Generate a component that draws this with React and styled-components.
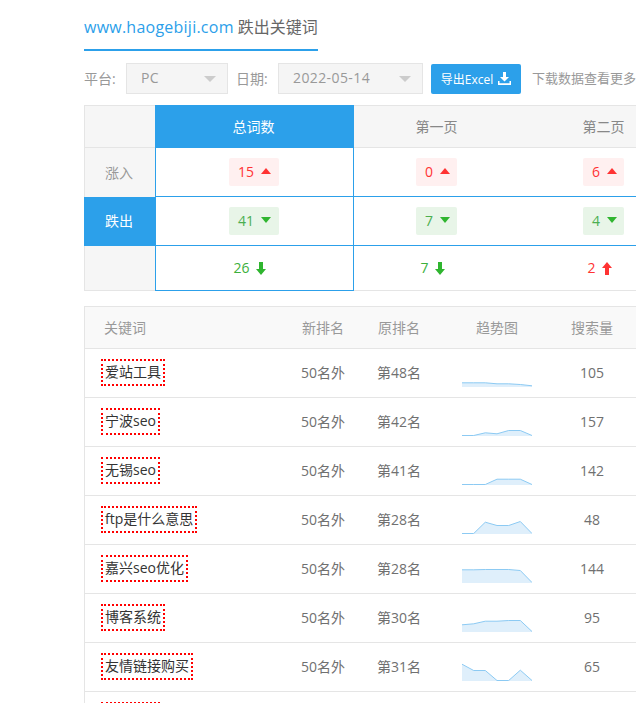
import React from "react";
import styled, { createGlobalStyle } from "styled-components";

const BLUE = "#2ca0ea";
const LINE = "#e5e5e5";
const RED = "#ff3333";
const GREEN = "#2fb52f";

const GlobalStyle = createGlobalStyle`
  html, body {
    margin: 0;
    padding: 0;
    height: 100%;
    overflow: hidden;
    background: #fff;
  }
  body {
    font-family: "Open Sans", "Noto Sans CJK SC", sans-serif;
    font-size: 14px;
    color: #666;
  }
  * { box-sizing: border-box; }
`;

const Page = styled.div`
  width: 800px;
  padding: 13px 0 0 84px;
`;

const Title = styled.h2`
  display: inline-block;
  margin: 0;
  height: 38px;
  font-size: 16px;
  font-weight: 400;
  line-height: 28px;
  color: #666;
  border-bottom: 2px solid ${BLUE};
  white-space: nowrap;
`;

const Domain = styled.span`
  color: ${BLUE};
  letter-spacing: 0.24px;
`;

const Filters = styled.div`
  display: flex;
  align-items: center;
  gap: 8px;
  margin-top: 12px;
  height: 31px;
  white-space: nowrap;
`;

const Label = styled.span`
  width: 34px;
  padding-bottom: 2px;
  color: #999;
`;

const Select = styled.div`
  display: flex;
  align-items: center;
  justify-content: space-between;
  width: ${(p) => p.$width}px;
  height: 31px;
  padding: 0 11px 2px 14px;
  background: #f5f5f5;
  border: 1px solid ${LINE};
  color: #999;
  letter-spacing: 0.4px;
`;

const Caret = styled.i`
  margin-top: 2px;
  border-left: 6px solid transparent;
  border-right: 6px solid transparent;
  border-top: 6px solid #ccc;
`;

const ExportButton = styled.div`
  display: flex;
  align-items: center;
  justify-content: center;
  gap: 5px;
  width: 90px;
  height: 30px;
  background: ${BLUE};
  border-radius: 2px;
  color: #fff;
  font-size: 12px;
`;

const Hint = styled.span`
  margin-left: 3px;
  padding-bottom: 2px;
  font-size: 13px;
  color: #999;
`;

const SummaryTable = styled.div`
  margin-top: 11px;
  width: 680px;
`;

const SummaryRow = styled.div`
  display: grid;
  grid-template-columns: 71px 199px 167px 167px 76px;
  height: ${(p) => p.$height}px;
`;

const HeadCell = styled.div`
  display: flex;
  align-items: center;
  justify-content: center;
  padding: 0 2px 2px 0;
  background: ${(p) => (p.$active ? BLUE : "#f6f6f6")};
  color: ${(p) => (p.$active ? "#fff" : "#888")};
  border-top: 1px solid ${(p) => (p.$active ? BLUE : LINE)};
  border-bottom: 1px solid ${(p) => (p.$active ? BLUE : LINE)};
  border-left: ${(p) => (p.$first ? `1px solid ${LINE}` : "none")};
`;

const SideCell = styled.div`
  display: flex;
  align-items: center;
  justify-content: center;
  padding: 0 2px 2px 0;
  background: ${(p) => (p.$active ? BLUE : "#f6f6f6")};
  color: ${(p) => (p.$active ? "#fff" : "#999")};
  border-left: 1px solid ${(p) => (p.$active ? BLUE : LINE)};
  border-bottom: ${(p) => (p.$active ? `1px solid ${BLUE}` : p.$last ? `1px solid ${LINE}` : "none")};
`;

const Cell = styled.div`
  display: flex;
  align-items: center;
  justify-content: center;
  padding-right: 2px;
  border-bottom: 1px solid ${(p) => (p.$last && !p.$active ? LINE : BLUE)};
  border-left: ${(p) => (p.$active ? `1px solid ${BLUE}` : "none")};
  border-right: ${(p) => (p.$active ? `1px solid ${BLUE}` : "none")};
`;

const Badge = styled.span`
  display: flex;
  align-items: center;
  justify-content: center;
  gap: 7px;
  width: ${(p) => (p.$wide ? 50 : 41)}px;
  height: 28px;
  padding: 0 0 2px 2px;
  border-radius: 2px;
  background: ${(p) => (p.$up ? "#fff0f0" : "#e8f5e8")};
  color: ${(p) => (p.$up ? RED : "#4caf50")};
`;

const Triangle = styled.i`
  border-left: 5px solid transparent;
  border-right: 5px solid transparent;
  border-bottom: ${(p) => (p.$up ? `6px solid ${RED}` : "none")};
  border-top: ${(p) => (p.$up ? "none" : `6px solid ${GREEN}`)};
`;

const Diff = styled.span`
  display: flex;
  align-items: center;
  gap: 6px;
  padding: 0 8px 2px 0;
  color: ${(p) => (p.$up ? RED : "#3cb03c")};

  svg {
    margin-top: 2px;
  }
`;

const KeywordTable = styled.div`
  margin-top: 15px;
  width: 700px;
  border-left: 1px solid ${LINE};
  border-top: 1px solid ${LINE};
`;

const KeywordRow = styled.div`
  display: grid;
  grid-template-columns: 200px 76px 76px 120px 70px 1fr;
  height: ${(p) => (p.$head ? 42 : 49)}px;
  background: ${(p) => (p.$head ? "#f9f9f9" : "#fff")};
  border-bottom: 1px solid ${LINE};
`;

const Column = styled.div`
  display: flex;
  align-items: ${(p) => (p.$chart ? "flex-end" : "center")};
  justify-content: ${(p) => (p.$left ? "flex-start" : "center")};
  padding-left: ${(p) => (p.$left ? p.$left : 0)}px;
  padding-bottom: ${(p) => (p.$chart ? 10 : 2)}px;
  color: ${(p) => (p.$head ? "#999" : "#707070")};
`;

const Keyword = styled.span`
  display: inline-block;
  min-width: 59px;
  height: 27px;
  padding: 0 2px;
  border: 2px dotted #f00;
  color: #333;
  line-height: 21px;
  white-space: nowrap;
`;

const ArrowIcon = ({ up, color }) => (
  <svg width="10" height="13" viewBox="0 0 10 13">
    <path
      d={up ? "M5 0L10 6H7V13H3V6H0Z" : "M3 0H7V7H10L5 13L0 7H3Z"}
      fill={color}
    />
  </svg>
);

const DownloadIcon = () => (
  <svg width="13" height="13" viewBox="0 0 13 13">
    <path d="M5 0H8V5H11L6.5 9.5L2 5H5Z" fill="#fff" />
    <path d="M0 9H1.5V11.2H11.5V9H13V13H0Z" fill="#fff" />
  </svg>
);

const Spark = ({ points }) => {
  const step = 70 / (points.length - 1);
  const coords = points.map((h, i) => `${(i * step).toFixed(1)},${(19.5 - h).toFixed(1)}`);
  return (
    <svg width="70" height="20" viewBox="0 0 70 20" style={{ display: "block" }}>
      <polygon points={`0,20 ${coords.join(" ")} 70,20`} fill="#dfeffb" />
      <polyline points={coords.join(" ")} fill="none" stroke="#8ccaf3" strokeWidth="1" />
    </svg>
  );
};

const pages = [
  { up: 0, down: 7, diff: 7, rising: false },
  { up: 6, down: 4, diff: 2, rising: true },
];

const keywords = [
  { name: "爱站工具", rank: "第48名", count: 105, trend: [3.7, 3.7, 3.7, 2.7, 2.7, 2, 0.7] },
  { name: "宁波seo", rank: "第42名", count: 157, trend: [0, 0, 2.7, 1.7, 5, 5, 0] },
  { name: "无锡seo", rank: "第41名", count: 142, trend: [0, 0, 0, 5.3, 5.3, 5.3, 0] },
  { name: "ftp是什么意思", rank: "第28名", count: 48, trend: [0, 0, 11.3, 8, 8, 12, 0] },
  { name: "嘉兴seo优化", rank: "第28名", count: 144, trend: [12.7, 12.7, 13, 13, 13, 12, 0] },
  { name: "博客系统", rank: "第30名", count: 95, trend: [6.7, 7.7, 10.3, 10.3, 11, 11, 0] },
  { name: "友情链接购买", rank: "第31名", count: 65, trend: [16.3, 10, 10, 0, 0, 10.3, 0] },
];

export default function App() {
  return (
    <Page>
      <GlobalStyle />
      <Title>
        <Domain>www.haogebiji.com</Domain> 跌出关键词
      </Title>

      <Filters>
        <Label>平台:</Label>
        <Select $width={102}>
          PC
          <Caret />
        </Select>
        <Label>日期:</Label>
        <Select $width={145}>
          2022-05-14
          <Caret />
        </Select>
        <ExportButton>
          导出Excel
          <DownloadIcon />
        </ExportButton>
        <Hint>下载数据查看更多</Hint>
      </Filters>

      <SummaryTable>
        <SummaryRow $height={43}>
          <HeadCell $first />
          <HeadCell $active>总词数</HeadCell>
          <HeadCell>第一页</HeadCell>
          <HeadCell>第二页</HeadCell>
          <HeadCell />
        </SummaryRow>
        <SummaryRow $height={49}>
          <SideCell>涨入</SideCell>
          <Cell $active>
            <Badge $up $wide>15<Triangle $up /></Badge>
          </Cell>
          {pages.map((p, i) => (
            <Cell key={i}>
              <Badge $up>{p.up}<Triangle $up /></Badge>
            </Cell>
          ))}
          <Cell />
        </SummaryRow>
        <SummaryRow $height={49}>
          <SideCell $active>跌出</SideCell>
          <Cell $active>
            <Badge $wide>41<Triangle /></Badge>
          </Cell>
          {pages.map((p, i) => (
            <Cell key={i}>
              <Badge>{p.down}<Triangle /></Badge>
            </Cell>
          ))}
          <Cell />
        </SummaryRow>
        <SummaryRow $height={45}>
          <SideCell $last />
          <Cell $active $last>
            <Diff>26<ArrowIcon color={GREEN} /></Diff>
          </Cell>
          {pages.map((p, i) => (
            <Cell key={i} $last>
              <Diff $up={p.rising}>
                {p.diff}
                <ArrowIcon up={p.rising} color={p.rising ? RED : GREEN} />
              </Diff>
            </Cell>
          ))}
          <Cell $last />
        </SummaryRow>
      </SummaryTable>

      <KeywordTable>
        <KeywordRow $head>
          <Column $head $left={19}>关键词</Column>
          <Column $head>新排名</Column>
          <Column $head>原排名</Column>
          <Column $head>趋势图</Column>
          <Column $head>搜索量</Column>
        </KeywordRow>
        {keywords.map((k) => (
          <KeywordRow key={k.name}>
            <Column $left={16}><Keyword>{k.name}</Keyword></Column>
            <Column>50名外</Column>
            <Column>{k.rank}</Column>
            <Column $chart><Spark points={k.trend} /></Column>
            <Column>{k.count}</Column>
          </KeywordRow>
        ))}
        <KeywordRow>
          <Column $left={16}><Keyword /></Column>
        </KeywordRow>
      </KeywordTable>
    </Page>
  );
}
